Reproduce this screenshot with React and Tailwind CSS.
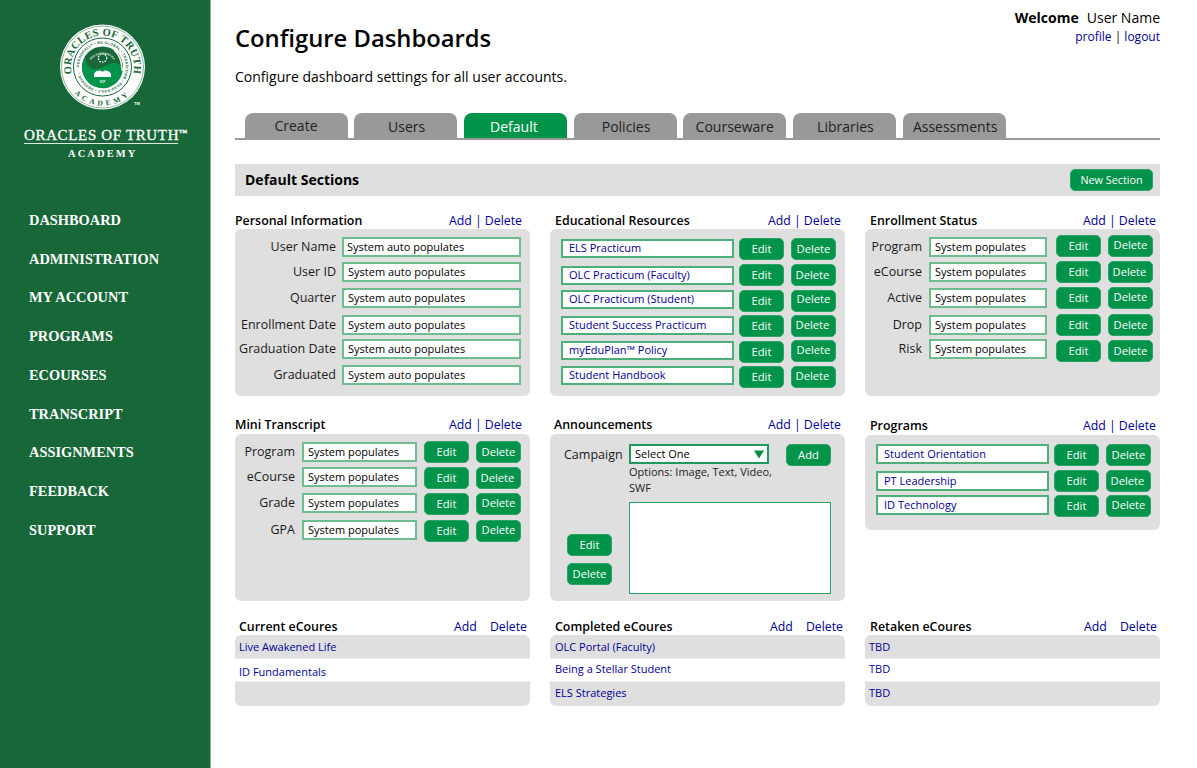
import React from "react";

const NAV = ["DASHBOARD","ADMINISTRATION","MY ACCOUNT","PROGRAMS","ECOURSES","TRANSCRIPT","ASSIGNMENTS","FEEDBACK","SUPPORT"];
const TABS = ["Create","Users","Default","Policies","Courseware","Libraries","Assessments"];
const TAB_CLS = ["pt-0 pl-0", "pt-[2px] pl-[2px]", "pt-[2px] pr-[3px]", "pt-[2px] pl-[2px]", "pt-[2px]", "pt-[2px] pl-[2px]", "pt-[2px] pl-[2px]"];

function Logo() {
  return (
    <svg width="100" height="100" viewBox="0 0 100 100" className="mt-[17px] ml-[52px] block">
      <defs>
        <path id="arcTop" d="M 21.9 63.3 A 31.5 31.5 0 1 1 79.1 63.3" />
        <path id="arcBot" d="M 13.3 60 A 38.5 38.5 0 0 0 87.7 60" />
        <path id="arcIn" d="M 27.2 50 A 23.3 23.3 0 1 1 73.8 50 A 23.3 23.3 0 1 1 27.2 50" />
        <path id="arcDisc" d="M 36.5 48 A 14.5 14.5 0 0 1 64.5 48" />
      </defs>
      <circle cx="50.5" cy="50" r="42.5" fill="#ffffff" />
      <circle cx="50.5" cy="50" r="41" fill="none" stroke="#176739" strokeWidth="0.5" />
      <circle cx="50.5" cy="50" r="29" fill="none" stroke="#176739" strokeWidth="1" />
      <circle cx="50.5" cy="50" r="20.5" fill="#176739" />
      <path d="M30.2 50 A20.3 20.3 0 0 0 70.8 52 C 67 42 58 46 50.5 50 C 43 54 35 53 33 40 A20.3 20.3 0 0 0 30.2 50 Z" fill="#00934a" />
      <path d="M62 33 C 70 40 69 48 70.5 54" fill="none" stroke="#ffffff" strokeWidth="1.4" />
      <circle cx="50.5" cy="41" r="4.2" fill="none" stroke="#ffffff" strokeWidth="1.3" strokeDasharray="1.6 1.1" />
      <path d="M42 57 C44.5 52.5 49 53 50.5 55 C52 53 56.5 52.5 59 57 L59 60 L42 60 Z" fill="#ffffff" />
      <text fontFamily="'Liberation Serif', serif" fontWeight="700" fontSize="10.5" fill="#176739" letterSpacing="0.3">
        <textPath href="#arcTop" startOffset="50%" textAnchor="middle">ORACLES OF TRUTH</textPath>
      </text>
      <text fontFamily="'Liberation Serif', serif" fontWeight="700" fontSize="7.5" fill="#176739" letterSpacing="3.4">
        <textPath href="#arcBot" startOffset="50%" textAnchor="middle">ACADEMY</textPath>
      </text>
      <text fontFamily="'Liberation Sans', sans-serif" fontWeight="700" fontSize="3.6" fill="#176739">
        <textPath href="#arcIn" startOffset="0%" textLength="140">PERSONALLY • BE GLOBAL • TRANSFORM • READ DAILY • OBSERVE •</textPath>
      </text>
      <text fontFamily="'Liberation Sans', sans-serif" fontWeight="700" fontSize="2.6" fill="#ffffff">
        <textPath href="#arcDisc" startOffset="50%" textAnchor="middle">ROS VIVIT ORACULA</textPath>
      </text>
      <text x="50.5" y="65.5" textAnchor="middle" fontFamily="'Liberation Sans', sans-serif" fontWeight="700" fontSize="2.6" fill="#ffffff">SOP</text>
      <text x="82" y="88" fontFamily="'Liberation Sans', sans-serif" fontWeight="700" fontSize="4" fill="#ffffff">TM</text>
    </svg>
  );
}

function Sidebar() {
  return (
    <aside className="w-[211px] shrink-0 h-screen bg-[#176739] border-r border-[#7fae93] font-['Liberation_Serif',serif] text-white">
      <Logo />
      <div className="ml-[24px] mt-[9px] w-[154px] border-b border-[#dfe9e2] h-[18px] flex items-center whitespace-nowrap text-[15px] leading-[18px] tracking-[0.65px] font-normal [-webkit-text-stroke:0.3px_white]">
        ORACLES OF TRUTH<sup className="text-[4.5px] font-bold">TM</sup>
      </div>
      <div className="mt-[3px] ml-[68px] text-[10.5px] leading-[14px] font-bold tracking-[2.1px]">ACADEMY</div>
      <nav className="mt-[40.4px] ml-[29px]">
        {NAV.map((n) => (
          <div key={n} className="h-[38.75px] flex items-center text-[14.4px] font-bold whitespace-nowrap">{n}</div>
        ))}
      </nav>
    </aside>
  );
}

function Links({ cls = "" }) {
  return (
    <span className={`text-[12.3px] text-[#000099] whitespace-nowrap ${cls}`}>
      Add | Delete
    </span>
  );
}

function Title({ text, box = "" }) {
  return (
    <div className={`h-[16px] flex items-center justify-between ${box}`}>
      <span className="text-[12.4px] font-semibold text-black whitespace-nowrap">{text}</span>
      <Links />
    </div>
  );
}

function Btn({ label, cls = "", tcls = "" }) {
  return (
    <div className={`h-[22px] w-[45px] shrink-0 rounded-[5px] bg-[#00934a] border border-[#2aa468] flex items-center justify-center text-[11.2px] text-white ${cls} ${tcls}`}>
      {label}
    </div>
  );
}

function Field({ text, cls = "", link = false, h = "h-[20px]", pad = "pl-[4px]" }) {
  return (
    <div className={`${h} ${pad} border-2 flex items-center text-[11px] bg-white whitespace-nowrap ${link ? "text-[#000099] border-[#4db07b]" : "text-black border-[#6dbd8e]"} ${cls}`}>
      {text}
    </div>
  );
}

function Label({ text, cls = "" }) {
  return <div className={`h-[20px] flex items-center justify-end text-[12.5px] text-[#1a1a1a] whitespace-nowrap ${cls}`}>{text}</div>;
}

const personal = [
  ["User Name", "mt-0", "pl-[3px]"],
  ["User ID", "mt-[5px]", "pl-[4px]"],
  ["Quarter", "mt-[6px]", "pl-[4px]"],
  ["Enrollment Date", "mt-[7px]", "pl-[4px]"],
  ["Graduation Date", "mt-[4px]", "pl-[4px]"],
  ["Graduated", "mt-[6px]", "pl-[4px]"],
];

const edu = [
  ["ELS Practicum", "mt-0", "mt-px", "", "", ""],
  ["OLC Practicum (Faculty)", "mt-[4px]", "mt-[2px]", "", "", "pr-[2px]"],
  ["OLC Practicum (Student)", "mt-[4px]", "mt-0", "", "", "pb-[3px]"],
  ["Student Success Practicum", "mt-[3px]", "mt-px", "", "", "pr-[2px] pb-[2px]"],
  ["myEduPlan™ Policy", "mt-[3px]", "mt-px", "mt-px", "", "pb-[2px]"],
  ["Student Handbook", "mt-[4px]", "mt-0", "", "", "pr-[2px] pb-[2px]"],
];

const enroll = [
  ["Program", "mt-0", "mt-[2px]", "", "", "pb-[1px]"],
  ["eCourse", "mt-[4px]", "mt-px", "", "", "pr-[2px]"],
  ["Active", "mt-[4px]", "mt-px", "", "", "pb-[2px]"],
  ["Drop", "mt-[5px]", "mt-px", "", "", ""],
  ["Risk", "mt-[3px]", "mt-0", "mt-px", "mt-px", ""],
];

const mini = [
  ["Program", "mt-0", "mt-px", "", "", ""],
  ["eCourse", "mt-[4px]", "mt-0", "", "", "pr-[2px]"],
  ["Grade", "mt-[4px]", "mt-0", "", "", "pb-[2px]"],
  ["GPA", "mt-[5px]", "mt-0", "", "", "pb-[1px]"],
];

const prog = [
  ["Student Orientation", "mt-0", "mt-0", "", "", ""],
  ["PT Leadership", "mt-[4px]", "mt-px", "", "", "pr-[2px]"],
  ["ID Technology", "mt-[3px]", "mt-0", "", "", "pb-[2px]"],
];

function BtnRow({ r, fieldW, labelW, link, g1, g2, g3, h }) {
  return (
    <div className={`h-[22px] flex items-start ${r[1]}`}>
      {labelW && <Label text={r[0]} cls={`${labelW} ${r[2]}`} />}
      <Field text={link ? r[0] : "System populates"} link={link} h={h} pad={link ? "pl-[6px]" : "pl-[4px]"} cls={`${fieldW} ${g1} ${r[2]}`} />
      <Btn label="Edit" cls={`${g2} ${r[3]}`} />
      <Btn label="Delete" cls={`${g3} ${r[4]}`} tcls={r[5]} />
    </div>
  );
}

function ListTable({ title, x, a, b, c, box, mid }) {
  return (
    <div>
      <div className={`h-[16px] pt-px flex items-center justify-between ${box}`}>
        <span className="text-[12.4px] font-semibold text-black">{title}</span>
        <span className="flex gap-[13px] text-[12.3px] text-[#000099]"><span>Add</span><span>Delete</span></span>
      </div>
      <div className="rounded-[6px] bg-[#dfdfdf] overflow-hidden text-[11px] text-[#000099] h-[71px] flex flex-col">
        <div className={`h-[23px] pt-px flex items-center ${x}`}>{a}</div>
        <div className={`h-[24px] bg-white border-y border-[#ececec] flex items-center ${x} ${mid}`}>{b}</div>
        <div className={`h-[24px] pb-[2px] flex items-center ${x}`}>{c}</div>
      </div>
    </div>
  );
}

export default function App() {
  return (
    <div className="flex min-h-screen bg-white font-['Open_Sans',sans-serif] text-black">
      <Sidebar />
      <main className="w-[925px] ml-[24px]">
        <header className="h-[100px] relative">
          <div className="absolute right-0 top-[8px] text-right">
            <div className="text-[14px] leading-[19px] whitespace-nowrap"><span className="font-bold">Welcome</span><span className="ml-[8px]">User Name</span></div>
            <div className="text-[12px] leading-[16px] mt-[2px] text-[#000099] whitespace-nowrap">profile <span className="text-black">|</span> logout</div>
          </div>
          <h1 className="pt-[21px] text-[23.8px] leading-[34px] font-semibold text-black whitespace-nowrap">Configure Dashboards</h1>
          <p className="mt-[12px] text-[14px] leading-[19px]">Configure dashboard settings for all user accounts.</p>
        </header>

        <div className="h-[40px] pt-[13px] border-b-2 border-[#999999] flex gap-[6.7px] pl-[9.5px] box-border">
          {TABS.map((t, i) => (
            <div key={t} className={`w-[103px] h-[25px] rounded-t-[8px] flex items-center justify-center text-[14px] ${i === 2 ? "bg-[#00934a] text-white" : "bg-[#999999] text-[#222]"} ${TAB_CLS[i]}`}>{t}</div>
          ))}
        </div>

        <div className="mt-[24px] h-[32px] bg-[#dfdfdf] flex items-center justify-between pl-[10px] pr-[7px]">
          <span className="text-[14px] font-bold pb-[2px]">Default Sections</span>
          <div className="h-[22px] w-[83px] rounded-[5px] bg-[#00934a] border border-[#2aa468] flex items-center justify-center text-[10.8px] text-white">New Section</div>
        </div>

        <div className="mt-[17px] grid grid-cols-3 gap-x-[20px]">
          {/* Row 1 */}
          <div>
            <Title text="Personal Information" box="pr-[8px]" />
            <div className="h-[167px] rounded-[6px] bg-[#dfdfdf] pt-[8px]">
              {personal.map((r) => (
                <div key={r[0]} className={`flex h-[20px] ${r[1]}`}>
                  <Label text={r[0]} cls="w-[101px]" />
                  <Field text="System auto populates" pad={r[2]} cls="ml-[6px] w-[179px]" />
                </div>
              ))}
            </div>
          </div>
          <div>
            <Title text="Educational Resources" box="pl-[5px] pr-[4px]" />
            <div className="h-[167px] rounded-[6px] bg-[#dfdfdf] pt-[9px]">
              {edu.map((r) => (
                <BtnRow key={r[0]} r={r} link h="h-[19px]" fieldW="w-[173px]" g1="ml-[11px]" g2="ml-[5px]" g3="ml-[7px]" />
              ))}
            </div>
          </div>
          <div>
            <Title text="Enrollment Status" box="pl-[5px] pr-[4px]" />
            <div className="h-[167px] rounded-[6px] bg-[#dfdfdf] pt-[6px]">
              {enroll.map((r) => (
                <BtnRow key={r[0]} r={r} labelW="w-[57px]" fieldW="w-[118px]" g1="ml-[7px]" g2="ml-[9px]" g3="ml-[7px]" />
              ))}
            </div>
          </div>

          {/* Row 2 */}
          <div className="mt-[22px]">
            <Title text="Mini Transcript" box="pr-[8px] pb-[2px]" />
            <div className="h-[167px] rounded-[6px] bg-[#dfdfdf] pt-[7px]">
              {mini.map((r) => (
                <BtnRow key={r[0]} r={r} labelW="w-[60px]" fieldW="w-[115px]" g1="ml-[7px]" g2="ml-[7px]" g3="ml-[7px]" />
              ))}
            </div>
          </div>
          <div className="mt-[22px]">
            <Title text="Announcements" box="pl-[4px] pr-[4px] pb-[2px]" />
            <div className="h-[167px] rounded-[6px] bg-[#dfdfdf] flex">
              <div className="w-[79px] pl-[14px] pt-[10px] flex flex-col shrink-0">
                <Label text="Campaign" cls="justify-start pt-[2px]" />
                <Btn label="Edit" cls="mt-[70px] ml-[3px]" />
                <Btn label="Delete" cls="mt-[7px] ml-[3px]" />
              </div>
              <div className="pt-[10px]">
                <div className="flex items-start">
                  <div className="w-[140px] h-[20px] border-2 border-[#1b9a5b] bg-white flex items-center justify-between pl-[4px] pr-[3px] text-[11px] text-black">
                    Select One
                    <svg width="10" height="9" viewBox="0 0 10 9"><path d="M0 0.5 H10 L5 8.5 Z" fill="#0a8a45" /></svg>
                  </div>
                  <Btn label="Add" cls="ml-[17px]" />
                </div>
                <div className="-mt-[2px] w-[160px] text-[11px] leading-[16px] text-[#222]">Options: Image, Text, Video, SWF</div>
                <div className="mt-[6px] w-[202px] h-[92px] bg-white border border-[#2ea66a]"></div>
              </div>
            </div>
          </div>
          <div className="mt-[23px]">
            <Title text="Programs" box="pl-[5px] pr-[4px] pb-[2px]" />
            <div className="h-[95px] rounded-[6px] bg-[#dfdfdf] pt-[9px]">
              {prog.map((r) => (
                <BtnRow key={r[0]} r={r} link fieldW="w-[173px]" g1="ml-[11px]" g2="ml-[5px]" g3="ml-[7px]" />
              ))}
            </div>
          </div>

          {/* Row 3 */}
          <div className="mt-[18px] col-start-1">
            <ListTable title="Current eCoures" x="pl-[4px]" a="Live Awakened Life" b="ID Fundamentals" c="" box="pl-[4px] pr-[3px]" mid="pt-[4px]" />
          </div>
          <div className="mt-[18px]">
            <ListTable title="Completed eCoures" x="pl-[5px]" a="OLC Portal (Faculty)" b="Being a Stellar Student" c="ELS Strategies" box="pl-[5px] pr-[2px]" mid="pb-[2px]" />
          </div>
          <div className="mt-[18px]">
            <ListTable title="Retaken eCoures" x="pl-[4px]" a="TBD" b="TBD" c="TBD" box="pl-[5px] pr-[3px]" mid="pb-[2px]" />
          </div>
        </div>
      </main>
    </div>
  );
}
